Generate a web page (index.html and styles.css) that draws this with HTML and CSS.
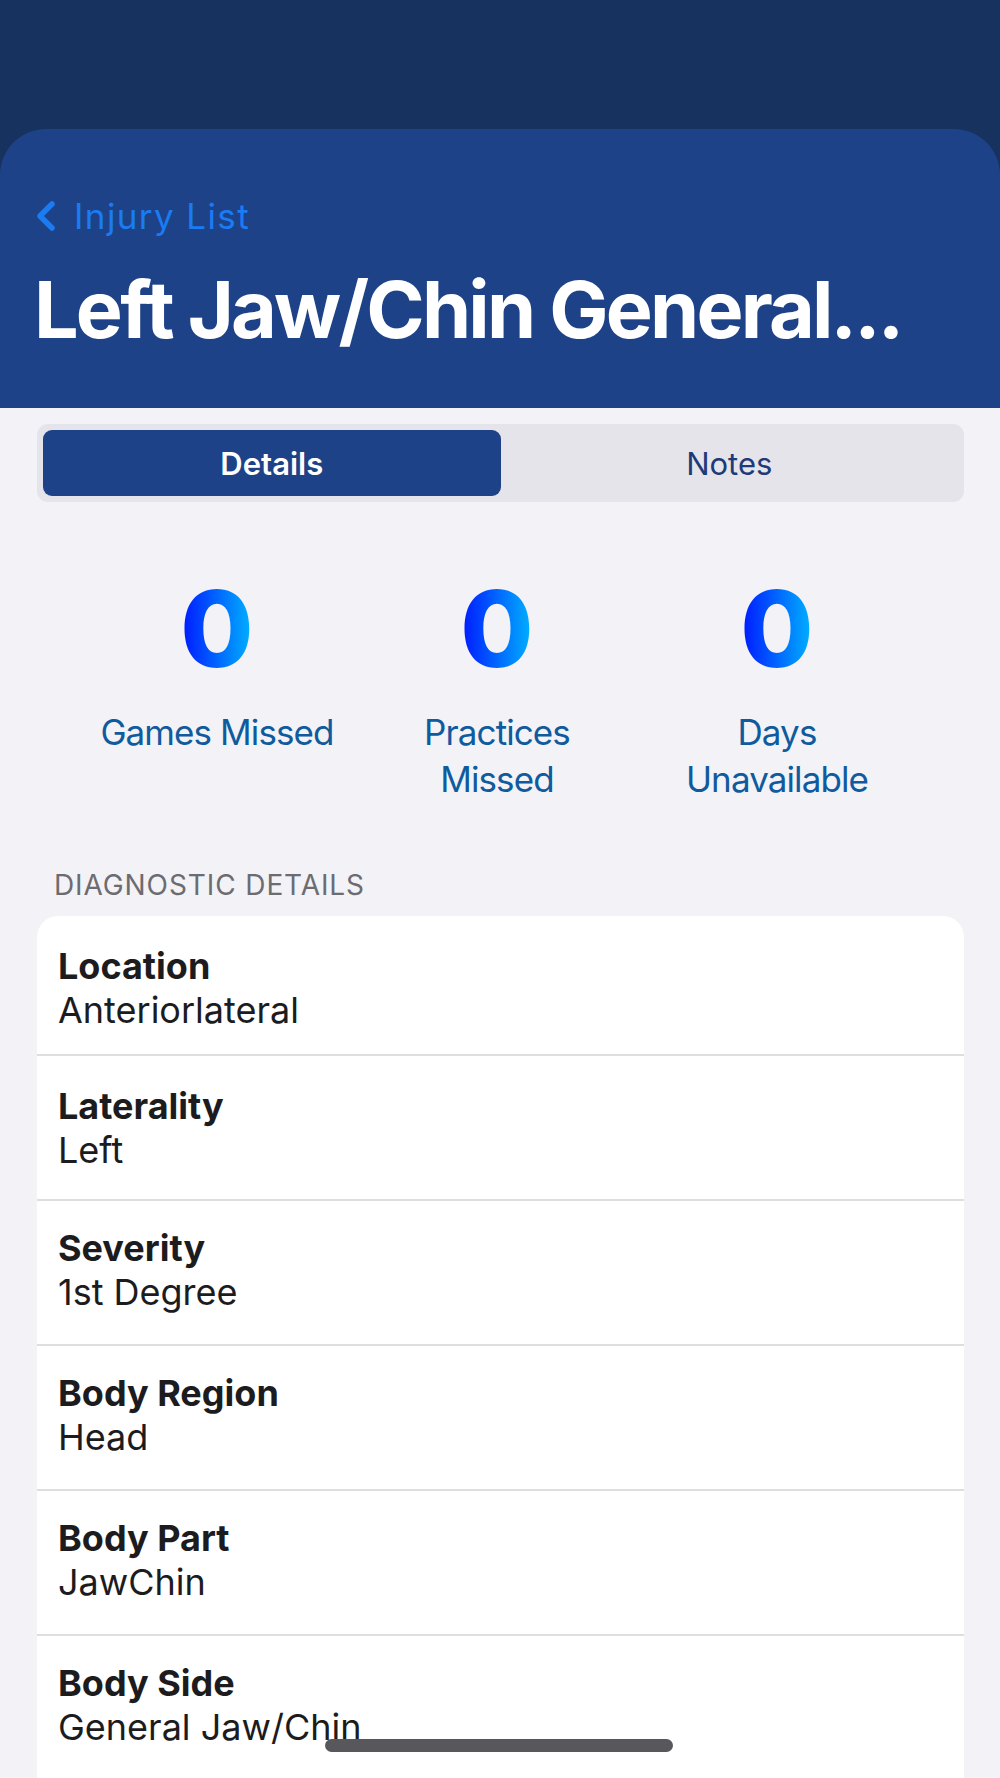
FILE: index.html
```html
<!DOCTYPE html>
<html lang="en">
<head>
<meta charset="utf-8">
<title>Left Jaw/Chin General</title>
<link rel="stylesheet" href="styles.css">
</head>
<body>
<div class="top">
  <header class="nav">
    <div class="back">
      <svg class="chev" viewBox="0 0 20 30" width="20" height="30"><path d="M16 3 L4 15 L16 27" fill="none" stroke="#1b7bf2" stroke-width="5.5" stroke-linecap="round" stroke-linejoin="round"/></svg>
      <span class="back-text">Injury List</span>
    </div>
    <h1 class="title">Left Jaw/Chin General...</h1>
  </header>
</div>
<main class="content">
  <div class="segment">
    <div class="seg seg-active">Details</div>
    <div class="seg">Notes</div>
  </div>
  <div class="stats">
    <div class="stat"><span class="num">0</span><div class="label">Games Missed</div></div>
    <div class="stat"><span class="num">0</span><div class="label">Practices<br>Missed</div></div>
    <div class="stat"><span class="num">0</span><div class="label">Days<br>Unavailable</div></div>
  </div>
  <div class="section-title">DIAGNOSTIC DETAILS</div>
  <div class="card">
    <div class="row"><div class="row-label">Location</div><div class="row-value">Anteriorlateral</div></div>
    <div class="row"><div class="row-label">Laterality</div><div class="row-value">Left</div></div>
    <div class="row"><div class="row-label">Severity</div><div class="row-value">1st Degree</div></div>
    <div class="row"><div class="row-label">Body Region</div><div class="row-value">Head</div></div>
    <div class="row"><div class="row-label">Body Part</div><div class="row-value">JawChin</div></div>
    <div class="row"><div class="row-label">Body Side</div><div class="row-value">General Jaw/Chin</div></div>
  </div>
</main>
<div class="home-indicator"></div>
</body>
</html>
```
FILE: styles.css
```css
html, body {
  margin: 0;
  padding: 0;
}
body {
  background: #f2f2f7;
  font-family: Inter, "Noto Sans", "DejaVu Sans", sans-serif;
  width: 1000px;
  color: #1c1c1e;
}
.top {
  background: #17325f;
  padding-top: 129px;
}
.nav {
  background: #1e4288;
  border-radius: 46px 46px 0 0;
  height: 279px;
  box-sizing: border-box;
  padding: 65px 30px 0 34px;
}
.back {
  display: flex;
  align-items: center;
  height: 44px;
  color: #1b7bf2;
}
.chev {
  display: block;
  margin-left: 2px;
  margin-right: 18px;
}
.back-text {
  font-size: 35px;
  line-height: 44px;
  letter-spacing: 1.4px;
}
.title {
  margin: 23px 0 0 0;
  font-size: 79px;
  line-height: 96px;
  font-weight: 700;
  color: #ffffff;
  white-space: nowrap;
  letter-spacing: -2.8px;
}
.content {
  padding: 0 36px 0 37px;
}
.segment {
  margin-top: 16px;
  height: 78px;
  box-sizing: border-box;
  padding: 6px;
  background: #e4e4ea;
  border-radius: 11px;
  display: grid;
  grid-template-columns: 1fr 1fr;
}
.seg {
  display: flex;
  align-items: center;
  justify-content: center;
  font-size: 31px;
  color: #1e3a78;
  border-radius: 9px;
}
.seg-active {
  background: #1e4288;
  color: #ffffff;
  font-weight: 600;
}
.stats {
  margin: 74px 0 0 40px;
  width: 840px;
  display: grid;
  grid-template-columns: repeat(3, 1fr);
  text-align: center;
}
.num {
  display: inline-block;
  font-size: 106px;
  line-height: 106px;
  font-weight: 800;
  background: linear-gradient(90deg, #0016ff, #00b6ff);
  -webkit-background-clip: text;
  background-clip: text;
  color: transparent;
}
.label {
  margin-top: 27px;
  font-size: 35px;
  line-height: 47px;
  letter-spacing: -0.9px;
  color: #105a9e;
}
.section-title {
  margin: 65px 0 0 17px;
  font-size: 28px;
  line-height: 34px;
  letter-spacing: 0.9px;
  color: #6c6c70;
}
.card {
  margin-top: 14px;
  background: #ffffff;
  border-radius: 21px 21px 0 0;
}
.row {
  padding: 25px 21px 30px 21px;
  border-top: 2px solid #dedee0;
}
.row:first-child {
  border-top: none;
  padding-top: 28px;
  padding-bottom: 22px;
}
.row:nth-child(2) {
  padding-top: 28px;
  padding-bottom: 27px;
}
.row-label {
  font-size: 36px;
  line-height: 44px;
  font-weight: 700;
}
.row-value {
  font-size: 36px;
  line-height: 44px;
}
.home-indicator {
  position: fixed;
  left: 325px;
  bottom: 26px;
  width: 348px;
  height: 13px;
  border-radius: 7px;
  background: #58585c;
}
```
